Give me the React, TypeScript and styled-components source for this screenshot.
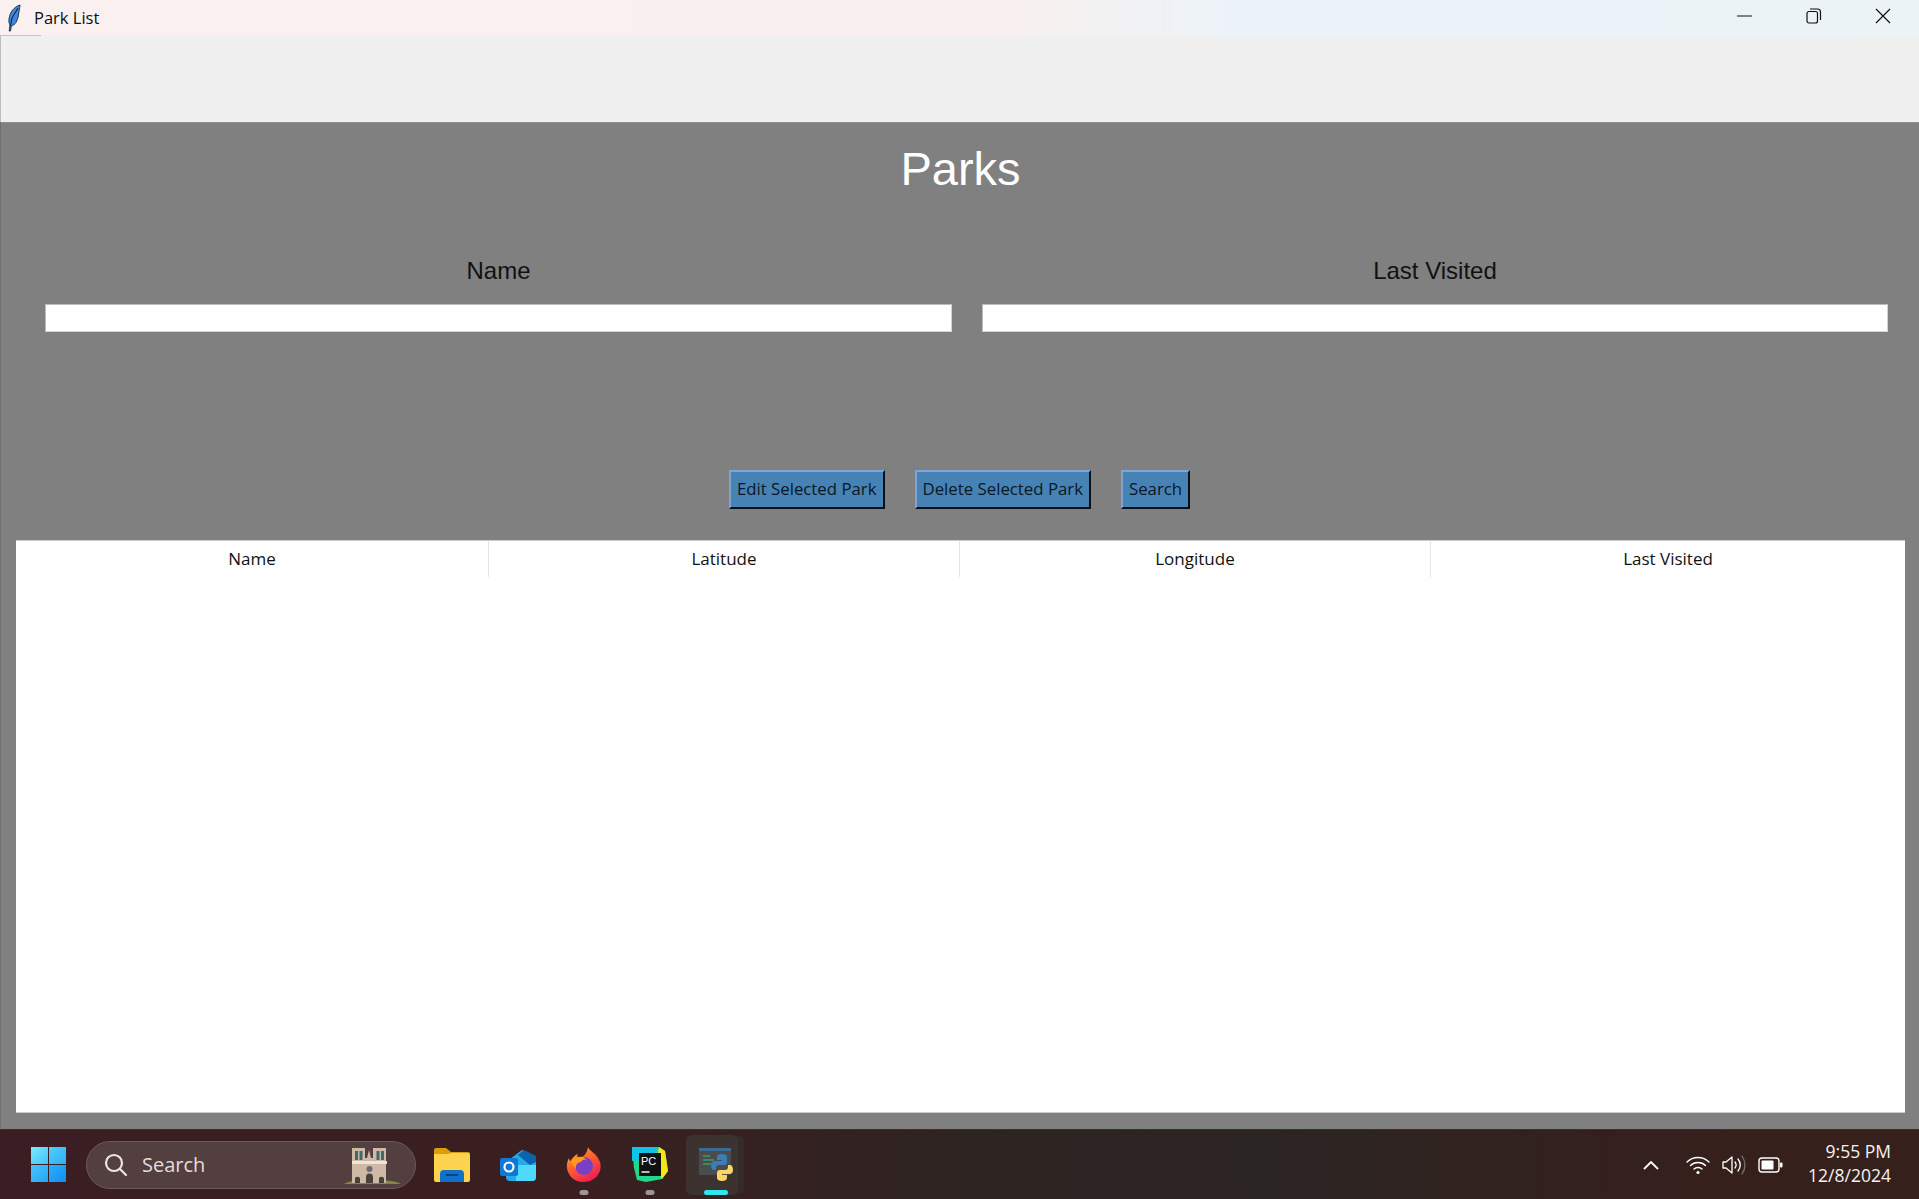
import React from 'react'
import styled, {createGlobalStyle} from 'styled-components'

const GlobalStyle = createGlobalStyle`
  html, body {
    margin: 0;
    padding: 0;
    height: 100%;
    overflow: hidden;
    font-family: 'Open Sans', 'Noto Sans', sans-serif;
  }
  * {
    box-sizing: border-box;
  }
`

const Page = styled.div`
  width: 1919px;
  height: 1199px;
  display: flex;
  flex-direction: column;
`

const TitleBar = styled.div`
  height: 35px;
  flex: none;
  display: flex;
  align-items: center;
  padding-left: 7px;
  background: linear-gradient(90deg, #f9f0ef 0%, #f8f0ee 52%, #ecf3f8 64%, #ecf3f7 100%);
`

const TitleText = styled.span`
  margin-left: 13px;
  font-size: 16.5px;
  color: #111;
`

const WindowControls = styled.div`
  margin-left: auto;
  display: flex;
  align-items: center;
  padding: 0 28px 3px 0;
  gap: 53px;
`

const MenuGap = styled.div`
  height: 87px;
  flex: none;
  background: #f0f0f0;
  border-left: 1px solid #bdbdbd;
  position: relative;
  &::before {
    content: '';
    position: absolute;
    top: 0;
    left: -1px;
    width: 41px;
    height: 1px;
    background: #c4c4c4;
  }
`

const Main = styled.main`
  flex: 1;
  min-height: 0;
  background: #808080;
  border-top: 1px solid #8f8f8f;
  border-left: 1px solid #6f6f6f;
  display: flex;
  flex-direction: column;
  padding: 0 14px 16px 15px;
`

const Heading = styled.h1`
  margin: 19px 0 0;
  height: 54px;
  text-align: center;
  font: 400 47px/54px 'Liberation Sans', Arial, sans-serif;
  color: #fff;
`

const FormGrid = styled.div`
  margin: 0 15px 0 29px;
  display: grid;
  grid-template-columns: 907px 906px;
  column-gap: 30px;
  padding-top: 61px;
`

const Field = styled.label`
  display: flex;
  flex-direction: column;
  align-items: center;
  gap: 19px;
`

const FieldLabel = styled.span`
  font: 400 24px/28px 'Liberation Sans', Arial, sans-serif;
  color: #111;
`

const Entry = styled.input`
  width: 100%;
  height: 28px;
  background: #fff;
  border: 1px solid #d4d4d4;
  border-top-color: #bcbcbc;
  border-left-color: #bcbcbc;
  outline: none;
`

const Actions = styled.div`
  margin-top: 138px;
  padding-right: 2px;
  display: flex;
  justify-content: center;
  gap: 30px;
`

const ActionButton = styled.button`
  height: 39px;
  padding: 0 6px;
  background: #4682b4;
  color: #0b1726;
  font: 400 16.8px/1 'Open Sans', 'Noto Sans', sans-serif;
  border: 2px solid;
  border-color: #7fa5d8 #0a0f14 #0a0f14 #7fa5d8;
  border-radius: 0;
`

const Tree = styled.div`
  margin-top: 31px;
  flex: 1;
  min-height: 0;
  background: #fff;
  border-top: 1px solid #c9ccd2;
  border-bottom: 1px solid #c9ccd2;
`

const TreeHeader = styled.div`
  height: 36px;
  display: grid;
  grid-template-columns: 473px 471px 471px 1fr;
`

const TreeColumn = styled.div`
  display: flex;
  align-items: center;
  justify-content: center;
  padding-bottom: 2px;
  font-size: 17px;
  color: #111;
  border-right: 1px solid #e5e5e5;
  &:last-child {
    border-right: none;
  }
`

const Taskbar = styled.footer`
  height: 70px;
  flex: none;
  display: flex;
  align-items: center;
  padding-left: 31px;
  border-top: 1px solid #3d2d2d;
  background: linear-gradient(90deg, #3a1e23 0%, #3a1f20 30%, #2e2422 50%, #2b2523 66%, #34201c 85%, #36201b 100%);
`

const StartIcon = styled.div`
  width: 35px;
  height: 35px;
  flex: none;
  display: grid;
  grid-template-columns: 1fr 1fr;
  gap: 1.5px;
`

const StartPane = styled.span<{$from: string; $to: string}>`
  background: linear-gradient(135deg, ${({$from}) => $from}, ${({$to}) => $to});
`

const SearchBox = styled.div`
  margin-left: 20px;
  width: 330px;
  height: 48px;
  flex: none;
  display: flex;
  align-items: center;
  padding-left: 17px;
  border-radius: 24px;
  background: #533e40;
  border: 1px solid #6b5a5b;
  color: #e4dcdc;
  font-size: 20px;
  position: relative;
`

const SearchText = styled.span`
  margin-left: 14px;
`

const Cathedral = styled.svg`
  position: absolute;
  right: 13px;
  bottom: 3px;
`

const TaskIcons = styled.div`
  margin-left: 3px;
  display: flex;
  align-items: center;
`

const TaskSlot = styled.div<{$active?: boolean}>`
  width: 66px;
  height: 60px;
  flex: none;
  display: flex;
  align-items: center;
  justify-content: center;
  position: relative;
  ${({$active}) => $active && `
    width: 52px;
    margin-left: 3px;
    padding-left: 9px;
    background: #3c3230;
    border-radius: 6px;
    box-shadow: 7px 0 0 -1px #352c2a;
  `}
`

const RunningDot = styled.span<{$active?: boolean}>`
  position: absolute;
  bottom: 0;
  left: ${({$active}) => ($active ? '58%' : '50%')};
  transform: translateX(-50%);
  width: ${({$active}) => ($active ? '24px' : '9px')};
  height: 5px;
  border-radius: 3px;
  background: ${({$active}) => ($active ? '#2fe6ee' : '#9b9594')};
`

const Tray = styled.div`
  margin-left: auto;
  display: flex;
  align-items: center;
  padding-right: 28px;
  color: #fff;
`

const TrayIcons = styled.div`
  display: flex;
  align-items: center;
  gap: 12px;
  margin-right: 25px;
`

const Chevron = styled.svg`
  margin-right: 27px;
`

const Clock = styled.div`
  display: flex;
  flex-direction: column;
  align-items: flex-end;
  margin-top: -3px;
  font-size: 17.5px;
  line-height: 24px;
  color: #f4f2f1;
`

const Feather = () => (
  <svg width="14" height="28" viewBox="0 0 14 28">
    <path d="M13 1C7 3 3 8 2 15c-.3 2.500 0 4 1 6l-.8 6h1.300l.8-5c4-1 6-5 7-10 .5-4 1.500-8 1.700-11z" fill="#3d86dc" stroke="#26364a" strokeWidth="1" />
    <path d="M11 4 5 14 3.500 22" fill="none" stroke="#0f1a28" strokeWidth="1" />
  </svg>
)

const MinimizeIcon = () => (
  <svg width="16" height="16" viewBox="0 0 16 16">
    <path d="M0 8h15" stroke="#111" strokeWidth="1" />
  </svg>
)

const RestoreIcon = () => (
  <svg width="16" height="16" viewBox="0 0 16 16" fill="none" stroke="#111" strokeWidth="1.200">
    <rect x="1" y="3.500" width="10.500" height="11.500" rx="2" />
    <path d="M4 1h7.500a3 3 0 0 1 3 3v8" />
  </svg>
)

const CloseIcon = () => (
  <svg width="16" height="16" viewBox="0 0 16 16">
    <path d="M1 1l14 14M15 1 1 15" stroke="#111" strokeWidth="1.200" />
  </svg>
)

const SearchIcon = () => (
  <svg width="24" height="24" viewBox="0 0 24 24" fill="none" stroke="#ece6e6" strokeWidth="2.200">
    <circle cx="10" cy="10" r="8" />
    <path d="M16 16l6 6" strokeLinecap="round" />
  </svg>
)

const NotreDame = () => (
  <Cathedral width="58" height="38" viewBox="0 0 58 38">
    <path d="M0 37c8-6 48-6 57 0z" fill="#86873f" />
    <path d="M8 36V1h13v10h2l2-8 2 8h2V1h13v35z" fill="#cdb9a6" />
    <path d="M11 4h3v9h-3zM15.500 4h3v9h-3zM32.500 4h3v9h-3zM37 4h3v9h-3z" fill="#3f6a68" />
    <path d="M8 14h35v3H8z" fill="#efe4d8" />
    <circle cx="25.500" cy="22" r="3" fill="#6e6a70" />
    <path d="M11 36v-5a3 3 0 0 1 5 0v5zM22 36v-6a3.500 3.500 0 0 1 7 0v6zM35 36v-5a3 3 0 0 1 5 0v5z" fill="#4b4038" />
  </Cathedral>
)

const FolderIcon = () => (
  <svg width="36" height="34" viewBox="0 0 36 34">
    <path d="M0 2a2 2 0 0 1 2-2h10l5 4h17a2 2 0 0 1 2 2v6H0z" fill="#dc9d0d" />
    <path d="M0 6h14l3-1h17a2 2 0 0 1 2 2v25a2 2 0 0 1-2 2H2a2 2 0 0 1-2-2z" fill="#fdd24f" />
    <path d="M6 34V26a4 4 0 0 1 4-4h16a4 4 0 0 1 4 4v8z" fill="#0e73c8" />
    <path d="M12 27h12" stroke="#063f7a" strokeWidth="2" />
  </svg>
)

const OutlookIcon = () => (
  <svg width="36" height="32" viewBox="0 0 36 32">
    <path d="M6 13 22 1l14 7v20a4 4 0 0 1-4 4H10a4 4 0 0 1-4-4z" fill="#28a8ea" />
    <path d="M16 32V16h20v12a4 4 0 0 1-4 4z" fill="#50d9ff" />
    <path d="M18 6 24 1l12 6v6l-6 3z" fill="#0a64ad" />
    <rect y="9" width="18" height="18" rx="2" fill="#0f78d4" />
    <circle cx="9" cy="18" r="4.500" fill="none" stroke="#fff" strokeWidth="2.200" />
  </svg>
)

const FirefoxIcon = () => (
  <svg width="36" height="36" viewBox="0 0 36 36">
    <defs>
      <linearGradient id="fx" x1="0" y1="0" x2="0.6" y2="1">
        <stop offset="0" stopColor="#ffd02a" />
        <stop offset="0.45" stopColor="#ff6a2b" />
        <stop offset="1" stopColor="#f0204f" />
      </linearGradient>
    </defs>
    <path d="M22 0c1 4 9 6 12 15 3 11-5 20-16 20C7 35 0 27 1 17c.5-3 2-6 2-6 0 2 1 3 2 3 1-3 4-6 7-7-1 2-1 3 0 4 5 0 9-4 10-11z" fill="url(#fx)" />
    <circle cx="18" cy="19" r="9" fill="#7a3fc4" />
    <path d="M5 13c3-3 8-4 12-3 2 1 4 3 4 3-3-1-5 0-6 2-3 0-6 3-5 7-2-2-5-5-5-9z" fill="#ff9a1f" />
  </svg>
)

const PyCharmIcon = () => (
  <svg width="36" height="36" viewBox="0 0 36 36">
    <path d="M0 0h27l6 4 3 20-6 8-16 3-9-2-3-12z" fill="#21d789" />
    <path d="M0 0h27L18 12 0 14z" fill="#12c3e8" />
    <path d="M27 0l6 4 3 20-6 8-6-12z" fill="#f3e619" />
    <rect x="7" y="6" width="22" height="23" fill="#111" />
    <text x="9" y="18" fontSize="11" fontFamily="'Liberation Sans', sans-serif" fill="#fff">PC</text>
    <path d="M9.500 25h8" stroke="#fff" strokeWidth="1.400" />
  </svg>
)

const PythonAppIcon = () => (
  <svg width="36" height="36" viewBox="0 0 36 36">
    <rect x="0" y="1" width="32" height="27" fill="#4a4d50" />
    <rect x="0" y="1" width="32" height="3" fill="#3a6d92" />
    <path d="M4 9h7M4 13h11M4 17h8" stroke="#3ec06c" strokeWidth="1.200" />
    <path d="M18 10c0-2 2-3 5-3s5 1 5 3v5c0 2-1 3-3 3h-5c-2 0-3 1-3 3v2h-2c-2 0-3-2-3-5s2-4 4-4h7v-1h-5z" fill="#3b7db8" />
    <path d="M28 33c0 2-2 3-5 3s-5-1-5-3v-5c0-2 1-3 3-3h5c2 0 3-1 3-3v-2h2c2 0 3 2 3 5s-2 4-4 4h-7v1h5z" fill="#fcd663" transform="translate(0 -2)" />
  </svg>
)

const WifiIcon = () => (
  <svg width="24" height="20" viewBox="0 0 24 20" fill="none" stroke="#fff" strokeWidth="1.400" strokeLinecap="round">
    <path d="M1 7c6-6 16-6 22 0M4.500 10.500c4-4 11-4 15 0M8 14c2-2 6-2 8 0" />
    <circle cx="12" cy="17.500" r="1.600" fill="#fff" stroke="none" />
  </svg>
)

const VolumeIcon = () => (
  <svg width="24" height="22" viewBox="0 0 24 22" fill="none" stroke="#fff" strokeWidth="1.300">
    <path d="M1 8v6h3l6 5V3L4 8z" strokeLinejoin="round" />
    <path d="M13 8c1.500 2 1.500 4 0 6M16 5c3 4 3 8 0 12" strokeLinecap="round" />
    <path d="M20 2c4 6 4 12 0 18" stroke="#7a6f6c" strokeLinecap="round" />
  </svg>
)

const BatteryIcon = () => (
  <svg width="25" height="16" viewBox="0 0 25 16" fill="none">
    <rect x="1" y="1" width="20" height="14" rx="3" stroke="#fff" strokeWidth="1.400" />
    <rect x="3.500" y="3.500" width="12" height="9" rx="1" fill="#fff" />
    <rect x="22" y="5.500" width="2.500" height="5" rx="1" fill="#fff" />
  </svg>
)

const columns = ['Name', 'Latitude', 'Longitude', 'Last Visited']

const App = () => (
  <Page>
    <GlobalStyle />
    <TitleBar>
      <Feather />
      <TitleText>Park List</TitleText>
      <WindowControls>
        <MinimizeIcon />
        <RestoreIcon />
        <CloseIcon />
      </WindowControls>
    </TitleBar>
    <MenuGap />
    <Main>
      <Heading>Parks</Heading>
      <FormGrid>
        <Field>
          <FieldLabel>Name</FieldLabel>
          <Entry />
        </Field>
        <Field>
          <FieldLabel>Last Visited</FieldLabel>
          <Entry />
        </Field>
      </FormGrid>
      <Actions>
        <ActionButton>Edit Selected Park</ActionButton>
        <ActionButton>Delete Selected Park</ActionButton>
        <ActionButton>Search</ActionButton>
      </Actions>
      <Tree>
        <TreeHeader>
          {columns.map((c) => (
            <TreeColumn key={c}>{c}</TreeColumn>
          ))}
        </TreeHeader>
      </Tree>
    </Main>
    <Taskbar>
      <StartIcon>
        <StartPane $from="#7fe8ff" $to="#3fc4f8" />
        <StartPane $from="#52cdfb" $to="#2eb0f6" />
        <StartPane $from="#4cc4f8" $to="#22a6f5" />
        <StartPane $from="#2cb0f8" $to="#0f8ef5" />
      </StartIcon>
      <SearchBox>
        <SearchIcon />
        <SearchText>Search</SearchText>
        <NotreDame />
      </SearchBox>
      <TaskIcons>
        <TaskSlot>
          <FolderIcon />
        </TaskSlot>
        <TaskSlot>
          <OutlookIcon />
        </TaskSlot>
        <TaskSlot>
          <FirefoxIcon />
          <RunningDot />
        </TaskSlot>
        <TaskSlot>
          <PyCharmIcon />
          <RunningDot />
        </TaskSlot>
        <TaskSlot $active>
          <PythonAppIcon />
          <RunningDot $active />
        </TaskSlot>
      </TaskIcons>
      <Tray>
        <Chevron width="16" height="10" viewBox="0 0 16 10" fill="none" stroke="#fff" strokeWidth="1.800">
          <path d="M1 9l7-7 7 7" />
        </Chevron>
        <TrayIcons>
          <WifiIcon />
          <VolumeIcon />
          <BatteryIcon />
        </TrayIcons>
        <Clock>
          <span>9:55 PM</span>
          <span>12/8/2024</span>
        </Clock>
      </Tray>
    </Taskbar>
  </Page>
)

export default App
